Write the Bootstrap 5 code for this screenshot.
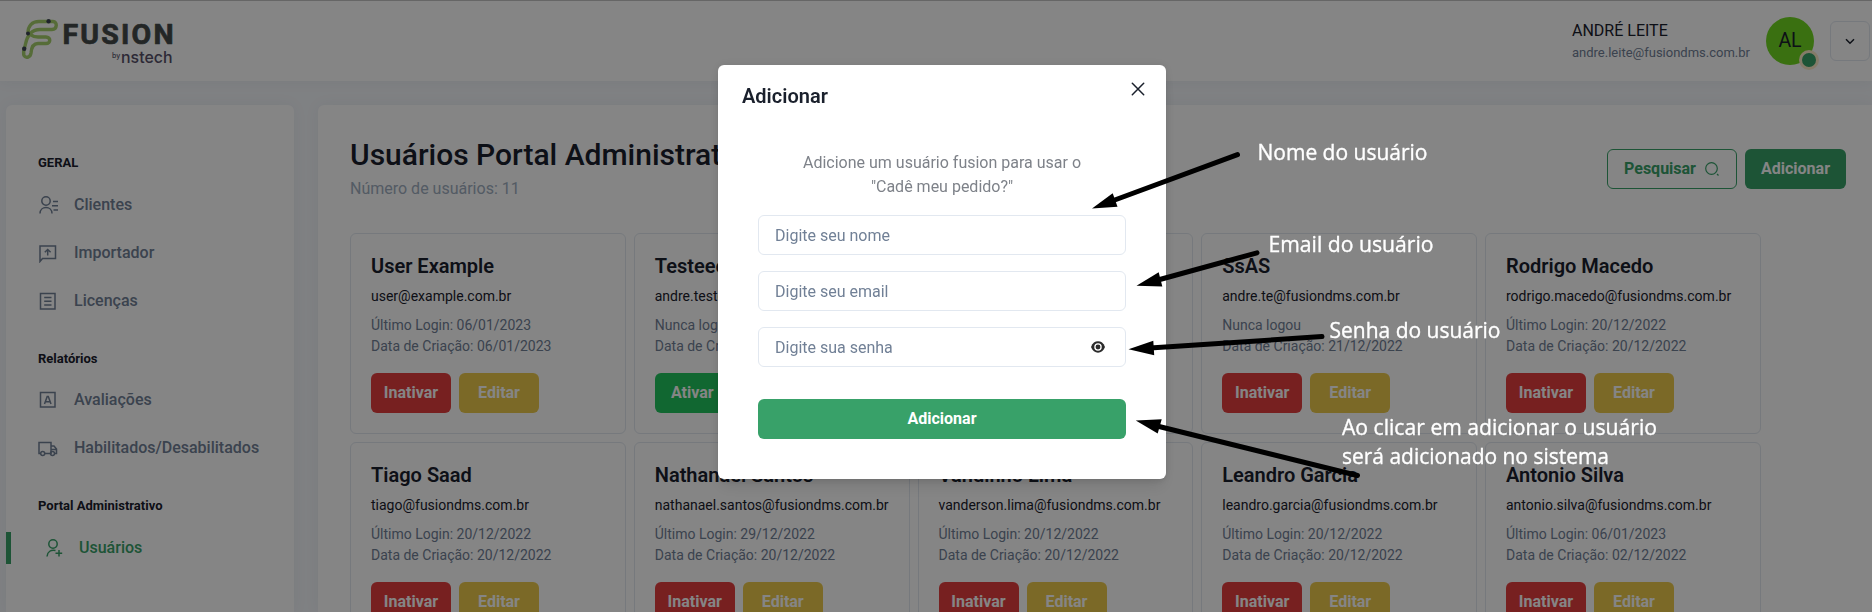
<!DOCTYPE html>
<html lang="pt-BR">
<head>
<meta charset="utf-8">
<meta name="viewport" content="width=device-width, initial-scale=1">
<title>Fusion - Usuários</title>
<link href="https://cdn.jsdelivr.net/npm/bootstrap@5.3.0/dist/css/bootstrap.min.css" rel="stylesheet">
<style>
  body { font-family: Roboto, "Liberation Sans", sans-serif; color: #1a202c; background: #f4f7fb; height: 612px; overflow: hidden; line-height: 1.5; }
  .topbar { height: 81px; padding: 0 2px 0 21px; border-top: 1px solid #c4c4c4; box-shadow: 0 2px 12px rgba(45,55,72,.05); }
  .user-name { font-size: 16px; line-height: 24px; }
  .user-mail { font-size: 13px; line-height: 20px; color: #718096; }
  .avatar { width: 48px; height: 48px; background: #70d721; font-size: 19.5px; }
  .avatar-dot { width: 20px; height: 20px; right: -5px; bottom: -5px; border: 3px solid #feebc8; background: #38a169; }
  .menu-btn { width: 40px; height: 40px; border: 1px solid #e2e8f0; border-radius: 6px; }
  .shell { padding: 24px 0 0 6px; gap: 24px; height: 531px; overflow: hidden; }
  .panel { box-shadow: 0 0 16px rgba(45,55,72,.05); }
  .sidebar { width: 288px; border-radius: 6px 6px 0 0; padding-top: 49px; }
  .side-title { font-size: 13px; font-weight: 700; line-height: 18px; margin: 0 0 9px; padding-left: 32px; }
  .side-title.later { margin-top: 25px; margin-bottom: 8px; }
  .side-link { height: 48px; padding-left: 32px; gap: 16px; color: #718096; font-weight: 500; font-size: 16px; text-decoration: none; }
  .side-link svg { width: 20px; height: 20px; fill: none; stroke: currentColor; stroke-width: 1.5; flex: none; }
  .side-link.active { color: #38a169; height: 32px; margin-top: 17px; border-left: 5px solid #38a169; gap: 13px; padding-left: 35px; }
  .main-panel { border-radius: 6px 0 0 0; padding: 0 26px 0 32px; overflow: hidden; }
  .page-head { height: 128px; padding-top: 30px; }
  .page-title { font-size: 30px; line-height: 40px; font-weight: 500; margin: 0; }
  .page-sub { font-size: 16px; line-height: 24px; color: #a0aec0; margin-top: 2px; }
  .page-actions { padding-top: 14px; }
  .act { height: 40px; padding: 0 16px; font-weight: 700; font-size: 16px; border-radius: 6px; line-height: 1; display: inline-flex; align-items: center; justify-content: center; border: 0; color: #fff; }
  .act-green { background: #38a169; }
  .act-line { border: 1px solid #38a169; color: #38a169; width: 130px; gap: 8px; }
  .act-red { background: #e53e3e; }
  .act-yellow { background: #ecc94b; }
  .user-grid { display: grid; grid-template-columns: repeat(5, 275.75px); grid-auto-rows: 201px; gap: 8px; }
  .user-card { border: 1px solid #e2e8f0; border-radius: 6px; padding: 20px; white-space: nowrap; }
  .user-card h2 { font-size: 20px; line-height: 24px; font-weight: 600; margin: 0 0 8px; }
  .uc-mail { font-size: 14px; line-height: 21px; margin-bottom: 8px; }
  .uc-meta { font-size: 14px; line-height: 21px; color: #718096; }
  .user-card .act { width: 80px; padding: 0; }
  .user-card .act-on { background: #22c55e; width: 75px; }
  .modal-backdrop.show { opacity: .48; }
  .modal-dialog.add-dialog { width: 448px; max-width: 448px; margin: 65px 0 0 718px; }
  .add-dialog .modal-content { height: 414px; border: 0; border-radius: 6px; box-shadow: 0 10px 15px -3px rgba(0,0,0,.1), 0 4px 6px -2px rgba(0,0,0,.05), 0 0 10px rgba(0,0,0,.1); color: #1a202c; }
  .add-dialog .modal-header { padding: 16px 24px; border: 0; height: 62px; }
  .add-dialog .modal-title { font-size: 20px; line-height: 30px; font-weight: 600; }
  .x-btn { right: 12px; top: 8px; width: 32px; height: 32px; background: none; border: 0; padding: 0; }
  .add-dialog .modal-body { padding: 24px 40px 0; }
  .lead-in { font-size: 16px; line-height: 24px; color: #7e8289; margin-bottom: 16px; }
  .add-dialog .form-control { height: 40px; padding: 0 16px; border: 1px solid #e2e8f0; border-radius: 6px; font-size: 16px; }
  .add-dialog .form-control::placeholder { color: #718096; opacity: 1; }
  .add-submit { margin-top: 32px; }
  .eye { right: 20px; top: 12px; }
  .notes { inset: 0; z-index: 2000; pointer-events: none; }
  .notes text { font-family: "Open Sans", "Noto Sans", sans-serif; font-size: 21.5px; fill: #fff; stroke: #fff; stroke-width: .35px; }
</style>
</head>
<body>
<header class="topbar bg-white d-flex align-items-center justify-content-between position-relative">
  <svg width="152" height="48" viewBox="21 17 152 48" role="img" aria-label="Fusion by nstech">
    <g fill="none" stroke="#a5cf6b" stroke-width="3.400" stroke-linecap="round">
      <path d="M28 33C28 26 32 21.500 39 21.500H53C57.500 21.500 57.500 29.500 52 29.500H40C31 29.500 27 37 25.500 44C24.500 49 22.500 52 24 55.500C26 59 30.500 57 31 53C31.500 47 33.500 43.500 38 43.500H46C51 43.500 51 37 46 37H38C33 37 30 34.500 28.500 33.500"/>
    </g>
    <g fill="#3d4455"><circle cx="48.600" cy="21.300" r="2.200"/><circle cx="28" cy="33.500" r="2"/><circle cx="24.200" cy="48.800" r="2.200"/></g>
    <text x="62.500" y="44" font-family="Roboto, sans-serif" font-weight="700" font-size="28.500" textLength="111" lengthAdjust="spacing" fill="#444a4a" stroke="#444a4a" stroke-width=".7" stroke-linejoin="round">FUSION</text>
    <text x="112" y="57.500" font-family="Inter, sans-serif" font-size="7" font-weight="500" fill="#5a566c">by</text>
    <text x="121" y="62.500" font-family="Inter, sans-serif" font-weight="500" font-size="16.500" textLength="51.500" lengthAdjust="spacingAndGlyphs" fill="#565069">nstech</text>
  </svg>
  <div class="d-flex align-items-center gap-3">
    <div>
      <div class="user-name">ANDRÉ LEITE</div>
      <div class="user-mail">andre.leite@fusiondms.com.br</div>
    </div>
    <div class="avatar rounded-circle d-flex align-items-center justify-content-center position-relative">AL<span class="avatar-dot rounded-circle position-absolute"></span></div>
    <button class="menu-btn bg-white p-0 d-flex align-items-center justify-content-center" aria-label="Menu">
      <svg width="10" height="7" viewBox="0 0 10 7" fill="none" stroke="#1a202c" stroke-width="1.500"><path d="M1 1.300L5 5.200L9 1.300"/></svg>
    </button>
  </div>
</header>

<div class="shell d-flex">
  <nav class="sidebar panel bg-white flex-shrink-0">
    <h6 class="side-title">GERAL</h6>
    <a class="side-link d-flex align-items-center" href="#"><svg viewBox="0 0 20 20"><circle cx="8" cy="6" r="4.200"/><path d="M2 18.500C2 10.500 14 10.500 14 18.500M15 6.500h5M14 10.800h6M15.500 15h4.500"/></svg>Clientes</a>
    <a class="side-link d-flex align-items-center" href="#"><svg viewBox="0 0 20 20"><path d="M2 18.500V3H17.500V15.500H4.500ZM9.700 12.500V6.500M6.800 9.200L9.700 6.500L12.600 9.200"/></svg>Importador</a>
    <a class="side-link d-flex align-items-center" href="#"><svg viewBox="0 0 20 20"><path d="M2.500 2.500H17V18H2.500ZM6.200 6.500H13.500M6.200 10.200H13.500M6.200 13.900H13.500"/></svg>Licenças</a>
    <h6 class="side-title later">Relatórios</h6>
    <a class="side-link d-flex align-items-center" href="#"><svg viewBox="0 0 20 20"><path d="M2.500 2.500H17V17H2.500ZM6.500 14L9.200 6.500H10.300L13 14M7.500 11.800H12"/></svg>Avaliações</a>
    <a class="side-link d-flex align-items-center" href="#"><svg viewBox="0 0 20 20"><path d="M2.500 15.500H1V4.500H13V15.500H7M13 8H16L18.500 11V15.500H17M13 11.500H18.500"/><circle cx="4.700" cy="15.500" r="2"/><circle cx="14.500" cy="15.500" r="2"/></svg>Habilitados/Desabilitados</a>
    <h6 class="side-title later">Portal Administrativo</h6>
    <a class="side-link active d-flex align-items-center" href="#"><svg viewBox="0 0 20 20"><circle cx="7" cy="6" r="4.200"/><path d="M1 18.500C1.500 13.500 5 11.500 9.500 12.500M13 12V18.500M9.500 15.200H16.200"/></svg>Usuários</a>
  </nav>

  <main class="main-panel panel bg-white flex-grow-1">
    <div class="page-head d-flex justify-content-between">
      <div>
        <h1 class="page-title">Usuários Portal Administrativo</h1>
        <div class="page-sub">Número de usuários: 11</div>
      </div>
      <div class="page-actions d-flex gap-2">
        <button class="act act-line bg-white">Pesquisar<svg width="16" height="16" viewBox="0 0 16 16" fill="none" stroke="currentColor" stroke-width="1.200"><circle cx="7.500" cy="7.500" r="5.800"/><path d="M13 13L14.500 14.500"/></svg></button>
        <button class="act act-green">Adicionar</button>
      </div>
    </div>
    <div class="user-grid">
      <article class="user-card"><h2>User Example</h2><div class="uc-mail">user@example.com.br</div><div class="uc-meta">Último Login: 06/01/2023<br>Data de Criação: 06/01/2023</div><div class="d-flex gap-2 mt-3"><button class="act act-red">Inativar</button><button class="act act-yellow">Editar</button></div></article>
      <article class="user-card"><h2>Testeee</h2><div class="uc-mail">andre.teste</div><div class="uc-meta">Nunca logou<br>Data de Criação</div><div class="d-flex gap-2 mt-3"><button class="act act-on">Ativar</button></div></article>
      <article class="user-card"></article>
      <article class="user-card"><h2>SsAS</h2><div class="uc-mail">andre.te@fusiondms.com.br</div><div class="uc-meta">Nunca logou<br>Data de Criação: 21/12/2022</div><div class="d-flex gap-2 mt-3"><button class="act act-red">Inativar</button><button class="act act-yellow">Editar</button></div></article>
      <article class="user-card"><h2>Rodrigo Macedo</h2><div class="uc-mail">rodrigo.macedo@fusiondms.com.br</div><div class="uc-meta">Último Login: 20/12/2022<br>Data de Criação: 20/12/2022</div><div class="d-flex gap-2 mt-3"><button class="act act-red">Inativar</button><button class="act act-yellow">Editar</button></div></article>
      <article class="user-card"><h2>Tiago Saad</h2><div class="uc-mail">tiago@fusiondms.com.br</div><div class="uc-meta">Último Login: 20/12/2022<br>Data de Criação: 20/12/2022</div><div class="d-flex gap-2 mt-3"><button class="act act-red">Inativar</button><button class="act act-yellow">Editar</button></div></article>
      <article class="user-card"><h2>Nathanael Santos</h2><div class="uc-mail">nathanael.santos@fusiondms.com.br</div><div class="uc-meta">Último Login: 29/12/2022<br>Data de Criação: 20/12/2022</div><div class="d-flex gap-2 mt-3"><button class="act act-red">Inativar</button><button class="act act-yellow">Editar</button></div></article>
      <article class="user-card"><h2>Vandinho Lima</h2><div class="uc-mail">vanderson.lima@fusiondms.com.br</div><div class="uc-meta">Último Login: 20/12/2022<br>Data de Criação: 20/12/2022</div><div class="d-flex gap-2 mt-3"><button class="act act-red">Inativar</button><button class="act act-yellow">Editar</button></div></article>
      <article class="user-card"><h2>Leandro Garcia</h2><div class="uc-mail">leandro.garcia@fusiondms.com.br</div><div class="uc-meta">Último Login: 20/12/2022<br>Data de Criação: 20/12/2022</div><div class="d-flex gap-2 mt-3"><button class="act act-red">Inativar</button><button class="act act-yellow">Editar</button></div></article>
      <article class="user-card"><h2>Antonio Silva</h2><div class="uc-mail">antonio.silva@fusiondms.com.br</div><div class="uc-meta">Último Login: 06/01/2023<br>Data de Criação: 02/12/2022</div><div class="d-flex gap-2 mt-3"><button class="act act-red">Inativar</button><button class="act act-yellow">Editar</button></div></article>
    </div>
  </main>
</div>

<div class="modal-backdrop show"></div>
<div class="modal show d-block overflow-hidden" tabindex="-1" role="dialog">
  <div class="modal-dialog add-dialog">
    <div class="modal-content">
      <div class="modal-header position-relative">
        <h5 class="modal-title">Adicionar</h5>
        <button class="x-btn position-absolute d-flex align-items-center justify-content-center" aria-label="Fechar"><svg width="14" height="14" viewBox="0 0 14 14" stroke="#1a202c" stroke-width="1.500" stroke-linecap="round"><path d="M1.300 1.300L12.700 12.700M12.700 1.300L1.300 12.700"/></svg></button>
      </div>
      <div class="modal-body">
        <p class="lead-in text-center">Adicione um usuário fusion para usar o<br>"Cadê meu pedido?"</p>
        <div class="d-grid gap-3">
          <input class="form-control" placeholder="Digite seu nome">
          <input class="form-control" placeholder="Digite seu email">
          <div class="position-relative">
            <input class="form-control" type="password" placeholder="Digite sua senha">
            <svg class="eye position-absolute" width="16" height="16" viewBox="0 0 16 16"><path d="M1 8C2.500 4 5 2.300 8 2.300S13.500 4 15 8C13.500 12 11 13.700 8 13.700S2.500 12 1 8Z" fill="#2b2b2b"/><circle cx="8" cy="8" r="3.100" fill="none" stroke="#fff" stroke-width="1.300"/></svg>
          </div>
        </div>
        <button class="act act-green w-100 add-submit">Adicionar</button>
      </div>
    </div>
  </div>
</div>

<svg class="notes position-absolute" width="1872" height="612" viewBox="0 0 1872 612">
  <g stroke="#000" stroke-width="5" stroke-linecap="round">
    <path d="M1237.500 154.700L1112 201"/><path d="M1257 252.800L1158 280"/><path d="M1322 336.600L1150 348"/><path d="M1357.500 475.500L1157 426"/>
  </g>
  <g fill="#000">
    <path d="M1092 208.600L1112.700 193.300L1117.500 206.700Z"/><path d="M1136.500 285.800L1158.700 272.300L1162.300 286.500Z"/><path d="M1128.500 349.300L1153.300 340.700L1154.200 355.200Z"/><path d="M1135.800 420.400L1161.700 419.300L1157.700 433.600Z"/>
  </g>
  <text x="1257.500" y="160" textLength="170" lengthAdjust="spacingAndGlyphs">Nome do usuário</text>
  <text x="1268.500" y="252" textLength="165" lengthAdjust="spacingAndGlyphs">Email do usuário</text>
  <text x="1329.500" y="338" textLength="171" lengthAdjust="spacingAndGlyphs">Senha do usuário</text>
  <text x="1342" y="435" textLength="315" lengthAdjust="spacingAndGlyphs">Ao clicar em adicionar o usuário</text>
  <text x="1342" y="464" textLength="267" lengthAdjust="spacingAndGlyphs">será adicionado no sistema</text>
</svg>
<script src="https://cdn.jsdelivr.net/npm/bootstrap@5.3.0/dist/js/bootstrap.bundle.min.js"></script>
</body>
</html>
